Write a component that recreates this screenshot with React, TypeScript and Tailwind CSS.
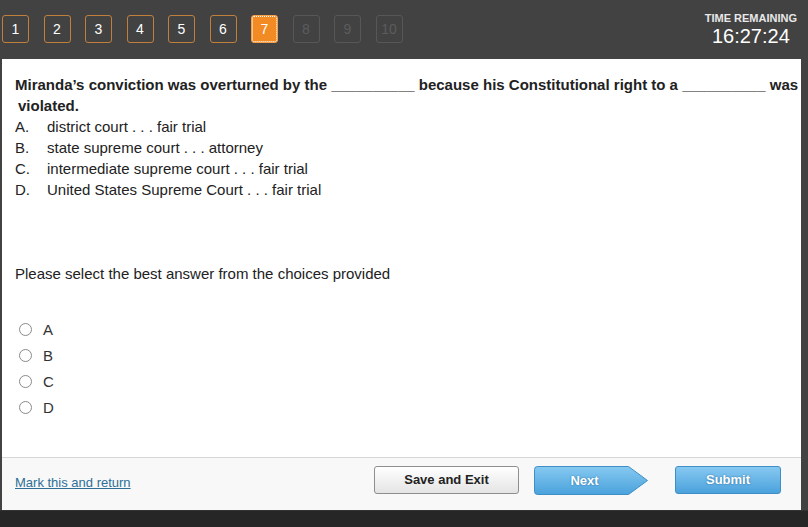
import React from 'react';

const pages = [1, 2, 3, 4, 5, 6, 7, 8, 9, 10];
const current = 7;

const options = [
  { key: 'A', text: 'district court . . . fair trial' },
  { key: 'B', text: 'state supreme court . . . attorney' },
  { key: 'C', text: 'intermediate supreme court . . . fair trial' },
  { key: 'D', text: 'United States Supreme Court . . . fair trial' },
];

const PageBox: React.FC<{ n: number }> = ({ n }) => {
  if (n === current) {
    return (
      <div className="w-[27px] h-[28px] rounded-[3px] bg-[#f28b24] border border-[#f5a04a] outline-1 outline-dotted outline-white -outline-offset-2 flex items-center justify-center text-white text-[14px]">
        {n}
      </div>
    );
  }
  const done = n < current;
  return (
    <div
      className={`w-[27px] h-[28px] rounded-[3px] border flex items-center justify-center text-[14px] ${
        done ? 'border-[#c0803c] text-white' : 'border-[#575757] text-[#5c5c5c]'
      }`}
    >
      {n}
    </div>
  );
};

const App: React.FC = () => {
  return (
    <div className="w-[808px] h-[527px] bg-[#424242] flex flex-col font-['Liberation_Sans',Arial,sans-serif] overflow-hidden">
      {/* Top bar */}
      <div className="h-[59px] shrink-0 flex items-start justify-between">
        <div className="flex gap-[14.5px] pl-[2px] pt-[15px]">
          {pages.map(n => (
            <PageBox key={n} n={n} />
          ))}
        </div>
        <div className="flex flex-col items-center pr-[11px] pt-[12px] text-white">
          <span className="text-[11px] font-bold leading-[13px] text-[#e8e8e8]">TIME REMAINING</span>
          <span className="text-[20px] leading-[22px]">16:27:24</span>
        </div>
      </div>

      {/* Main panel */}
      <div className="flex-1 flex flex-col ml-[2px] mr-[7px] bg-white">
        <div className="flex-1 pl-[13px] pt-[15px] text-[15px] leading-[21px] text-[#222]">
          <div className="font-bold whitespace-nowrap">
            Miranda’s conviction was overturned by the __________ because his Constitutional right to a __________ was
          </div>
          <div className="font-bold pl-[3px]">violated.</div>
          {options.map(o => (
            <div key={o.key} className="flex">
              <span className="w-[32px]">{o.key}.</span>
              <span>{o.text}</span>
            </div>
          ))}
          <div className="mt-[63px]">Please select the best answer from the choices provided</div>
          <div className="mt-[32px] flex flex-col">
            {options.map(o => (
              <label key={o.key} className="h-[26px] flex items-center">
                <span className="ml-[4px] w-[13px] h-[13px] rounded-full border border-[#8a8a8a] bg-white" />
                <span className="ml-[11px] text-[#333]">{o.key}</span>
              </label>
            ))}
          </div>
        </div>

        {/* Footer */}
        <div className="h-[53px] shrink-0 border-t border-[#d6d6d6] bg-[#f8f8f8] flex items-start pt-[8px] pl-[13px] pr-[20px]">
          <a href="#" className="text-[13px] text-[#2e6f96] underline mt-[7px]">
            Mark this and return
          </a>
          <div className="ml-auto flex items-start">
            <button className="w-[145px] h-[28px] rounded-[3px] border border-[#8e8e8e] bg-gradient-to-b from-white to-[#e4e4e4] text-[13px] font-bold text-[#222]">
              Save and Exit
            </button>
            <button className="relative ml-[15px] w-[115px] h-[29px] text-[13px] font-bold text-white">
              <svg className="absolute inset-0" width="115" height="29" viewBox="0 0 115 29">
                <defs>
                  <linearGradient id="nextg" x1="0" y1="0" x2="0" y2="1">
                    <stop offset="0" stopColor="#86c9f1" />
                    <stop offset="1" stopColor="#4aa2dc" />
                  </linearGradient>
                </defs>
                <path
                  d="M3.5 0.5 H94.5 L113.5 14.5 L94.5 28.5 H3.5 Q0.5 28.5 0.5 25.5 V3.5 Q0.5 0.5 3.5 0.5 Z"
                  fill="url(#nextg)"
                  stroke="#3e8fc6"
                />
              </svg>
              <span className="relative pr-[14px] [text-shadow:0_0_2px_rgba(0,60,110,0.6)]">Next</span>
            </button>
            <button className="ml-[26px] w-[106px] h-[28px] rounded-[3px] border border-[#3e8fc6] bg-gradient-to-b from-[#86c9f1] to-[#4aa2dc] text-[13px] font-bold text-white [text-shadow:0_0_2px_rgba(0,60,110,0.6)]">
              Submit
            </button>
          </div>
        </div>
      </div>

      {/* Bottom strip */}
      <div className="h-[17px] shrink-0 bg-[#262626] border-t border-[#333]" />
    </div>
  );
};

export default App;
